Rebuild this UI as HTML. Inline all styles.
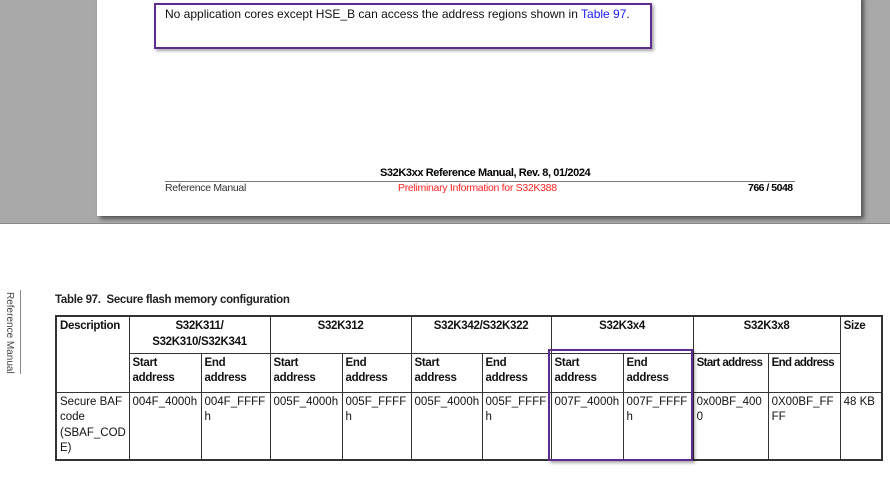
<!DOCTYPE html>
<html><head><style>
body{margin:0;width:890px;height:478px;position:relative;background:#fff;font-family:"Liberation Sans",Arial,sans-serif;overflow:hidden}
.gray{position:absolute;left:0;top:0;width:890px;height:223px;background:#a9a9a9;border-bottom:1px solid #8a8a8a}
.page{position:absolute;left:97px;top:-5px;width:764px;height:221px;background:#fff;box-shadow:3px 3px 4px #555}
.note{position:absolute;left:154px;top:3px;width:494px;height:42px;border:2.5px solid #5c2d8c;box-shadow:2px 2px 3px rgba(0,0,0,.35)}
.abs{position:absolute;white-space:nowrap}
table{position:absolute;left:55px;top:315px;border-collapse:collapse;font-size:11.5px;color:#111;table-layout:fixed}
td{border:1px solid #333;vertical-align:top;padding:2px 3px 0;line-height:15.5px;overflow:hidden}
th{border:1px solid #333;vertical-align:top;padding:2px 3px 0;font-weight:bold;text-align:left;line-height:15.5px;letter-spacing:-0.3px;overflow:hidden}
.hl{position:absolute;left:548px;top:349px;width:141px;height:108px;border:2.5px solid #5c2d8c;box-shadow:2px 2px 3px rgba(0,0,0,.35)}
.b{border-bottom:2px solid #333}
</style></head><body>
<div class="gray"></div>
<div class="page"></div>
<div class="note"></div>
<div class="abs" style="left:165px;top:7px;font-size:12px;color:#111">No application cores except HSE_B can access the address regions shown in <span style="color:#1a1aff">Table 97</span>.</div>
<div class="abs" style="left:380px;top:167px;font-size:11px;font-weight:bold;letter-spacing:-0.4px">S32K3xx Reference Manual, Rev. 8, 01/2024</div>
<div class="abs" style="left:165px;top:181px;width:630px;height:1px;background:#777"></div>
<div class="abs" style="left:165px;top:182px;font-size:10.5px;color:#333;letter-spacing:-0.3px">Reference Manual</div>
<div class="abs" style="left:398px;top:182px;font-size:10.5px;color:#f22;letter-spacing:-0.3px">Preliminary Information for S32K388</div>
<div class="abs" style="left:748px;top:182px;font-size:10.5px;font-weight:bold;letter-spacing:-0.5px">766 / 5048</div>
<div class="abs" style="left:20px;top:290px;width:1px;height:84px;background:#888"></div>
<div class="abs" style="left:4px;top:292px;font-size:10px;color:#444;writing-mode:vertical-rl">Reference Manual</div>
<div class="abs" style="left:55px;top:294px;font-size:11.5px;font-weight:bold;color:#222;letter-spacing:-0.3px">Table 97.&nbsp; Secure flash memory configuration</div>
<table style="width:826px">
<colgroup><col style="width:73px"><col style="width:72px"><col style="width:69px"><col style="width:72px"><col style="width:69px"><col style="width:71px"><col style="width:69px"><col style="width:72px"><col style="width:70px"><col style="width:75px"><col style="width:72px"><col style="width:42px"></colgroup>
<tr style="height:37px"><th rowspan="2" style="border-left:2px solid #333;border-top:2px solid #333">Description</th><th colspan="2" style="text-align:center;border-top:2px solid #333">S32K311/<br>S32K310/S32K341</th><th colspan="2" style="text-align:center;border-top:2px solid #333">S32K312</th><th colspan="2" style="text-align:center;border-top:2px solid #333">S32K342/S32K322</th><th colspan="2" style="text-align:center;border-top:2px solid #333">S32K3x4</th><th colspan="2" style="text-align:center;border-top:2px solid #333">S32K3x8</th><th rowspan="2" style="border-top:2px solid #333;border-right:2px solid #333">Size</th></tr>
<tr style="height:39px"><th>Start<br>address</th><th>End<br>address</th><th>Start<br>address</th><th>End<br>address</th><th>Start<br>address</th><th>End<br>address</th><th>Start<br>address</th><th>End<br>address</th><th style="white-space:nowrap;letter-spacing:-0.6px">Start address</th><th style="white-space:nowrap;letter-spacing:-0.6px">End address</th></tr>
<tr style="height:68px"><td class="b" style="border-left:2px solid #333">Secure BAF<br>code<br>(SBAF_COD<br>E)</td><td class="b">004F_4000h</td><td class="b">004F_FFFF<br>h</td><td class="b">005F_4000h</td><td class="b">005F_FFFF<br>h</td><td class="b">005F_4000h</td><td class="b">005F_FFFF<br>h</td><td class="b">007F_4000h</td><td class="b">007F_FFFF<br>h</td><td class="b">0x00BF_400<br>0</td><td class="b">0X00BF_FF<br>FF</td><td class="b" style="border-right:2px solid #333">48 KB</td></tr>
</table>
<div class="hl"></div>
</body></html>
